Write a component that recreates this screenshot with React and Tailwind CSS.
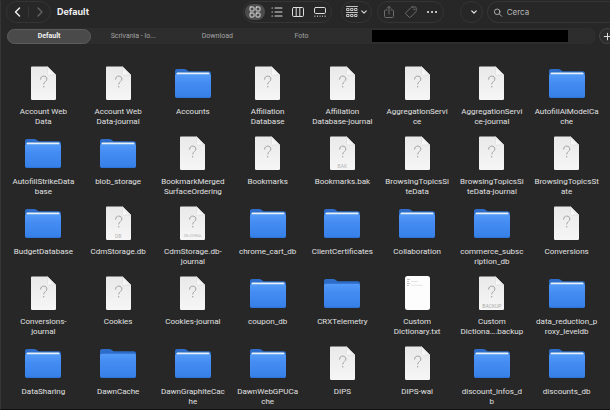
import React from 'react';

const files = [
  ['doc', 'Account Web', 'Data'],
  ['doc', 'Account Web', 'Data-journal'],
  ['folder', 'Accounts'],
  ['doc', 'Affiliation', 'Database'],
  ['doc', 'Affiliation', 'Database-journal'],
  ['doc', 'AggregationServi', 'ce'],
  ['doc', 'AggregationServi', 'ce-journal'],
  ['folder', 'AutofillAiModelCa', 'che'],
  ['folder', 'AutofillStrikeData', 'base'],
  ['folder', 'blob_storage'],
  ['doc', 'BookmarkMerged', 'SurfaceOrdering'],
  ['doc', 'Bookmarks'],
  ['bak', 'Bookmarks.bak'],
  ['doc', 'BrowsingTopicsSi', 'teData'],
  ['doc', 'BrowsingTopicsSi', 'teData-journal'],
  ['doc', 'BrowsingTopicsSt', 'ate'],
  ['folder', 'BudgetDatabase'],
  ['db', 'CdmStorage.db'],
  ['dbjournal', 'CdmStorage.db-', 'journal'],
  ['folder', 'chrome_cart_db'],
  ['folder', 'ClientCertificates'],
  ['folder', 'Collaboration'],
  ['folder', 'commerce_subsc', 'ription_db'],
  ['doc', 'Conversions'],
  ['doc', 'Conversions-', 'journal'],
  ['doc', 'Cookies'],
  ['doc', 'Cookies-journal'],
  ['folder', 'coupon_db'],
  ['empty', 'CRXTelemetry'],
  ['txt', 'Custom', 'Dictionary.txt'],
  ['backup', 'Custom', 'Dictiona….backup'],
  ['folder', 'data_reduction_p', 'roxy_leveldb'],
  ['folder', 'DataSharing'],
  ['empty', 'DawnCache'],
  ['folder', 'DawnGraphiteCac', 'he'],
  ['folder', 'DawnWebGPUCa', 'che'],
  ['doc', 'DIPS'],
  ['doc', 'DIPS-wal'],
  ['folder', 'discount_infos_d', 'b'],
  ['folder', 'discounts_db'],
];

const captions = {
  bak: ['BAK', 'text-[5px] text-[#b4b4b4]'],
  db: ['DB', 'text-[5px] text-[#b4b4b4]'],
  dbjournal: ['DB-JOURNAL', 'text-[3px] text-[#b4b4b4]'],
  backup: ['BACKUP', 'text-[5px] text-[#a8a8a8]'],
};

function Gradients() {
  return (
    <svg className="absolute size-0" aria-hidden="true">
      <defs>
        <linearGradient id="front" x1="0" y1="0" x2="0" y2="1">
          <stop offset="0" stopColor="#539af8" />
          <stop offset="0.35" stopColor="#448cf2" />
          <stop offset="1" stopColor="#3580e8" />
        </linearGradient>
        <linearGradient id="sheet" x1="0" y1="0" x2="0" y2="1">
          <stop offset="0" stopColor="#e9e9e9" />
          <stop offset="1" stopColor="#f6f6f6" />
        </linearGradient>
        <linearGradient id="fold" x1="0" y1="1" x2="1" y2="0">
          <stop offset="0" stopColor="#ffffff" />
          <stop offset="1" stopColor="#dcdcdc" />
        </linearGradient>
      </defs>
    </svg>
  );
}

function Folder({ filled }) {
  return (
    <svg className="size-9" viewBox="0 0 36 36" aria-hidden="true">
      <path d="M0 5C0 3.800.8 3 2.200 3h7c.9 0 1.500.2 2.200.7l1.400 1c.6.4 1.200.6 2 .6h19C35.200 5.300 36 6.100 36 7.500V20H0Z" fill="#2d6cc9" />
      {filled && <rect x="1.500" y="6.500" width="33" height="4" rx="1" fill="#e6f1f7" />}
      <path d={filled ? 'M0 10c0-1 .8-1.800 1.800-1.800h32.400c1 0 1.800.8 1.800 1.800v20c0 1.200-.8 2-2 2H2c-1.200 0-2-.8-2-2Z' : 'M0 9.500C0 8.500.8 7.700 1.800 7.700h32.400c1 0 1.800.8 1.800 1.800V30c0 1.200-.8 2-2 2H2c-1.200 0-2-.8-2-2Z'} fill="url(#front)" />
      <path d="M1 31.400h34" stroke="#2d71d3" strokeWidth=".8" />
    </svg>
  );
}

function Document({ kind }) {
  const caption = captions[kind];
  return (
    <span className="relative flex h-9 w-[25px] justify-center">
      <svg className="h-9 w-[25px]" viewBox="0 0 25 36" aria-hidden="true">
        <path d="M0 1.700C0 .9.500.5 1.200.5H16.500L25 9V32.700c0 .8-.4 1.200-1.200 1.200H1.200C.4 33.900 0 33.500 0 32.700Z" fill="url(#sheet)" />
        <path d="M16.500.5 25 9h-7c-1 0-1.500-.6-1.500-1.600Z" fill="url(#fold)" stroke="#cccccc" strokeWidth=".4" />
        <path d="M9.600 13.200c0-2 1.300-3.100 3.100-3.100s3.200 1.200 3.200 2.900c0 2.500-3.200 2.600-3.200 5.100" fill="none" stroke="#a2a2a2" strokeWidth="1" strokeLinecap="round" />
        <circle cx="12.700" cy="20.700" r=".75" fill="#a2a2a2" />
      </svg>
      {caption && (
        <span className={`absolute bottom-[3px] leading-[6px] ${caption[1]}`}>{caption[0]}</span>
      )}
    </span>
  );
}

function TextFile() {
  return (
    <svg className="h-9 w-[25px]" viewBox="0 0 25 36" aria-hidden="true">
      <rect width="25" height="34" rx="2.500" fill="#fdfdfd" />
      <path d="M2 3.500h3M2 5.500h2M2 7.500h3M2 9.500h2" stroke="#a9a9a9" strokeWidth=".7" />
      <path d="M6 5.500h7M6 9.300h12" stroke="#d2d2d2" strokeWidth=".6" />
    </svg>
  );
}

function Item({ entry }) {
  const [kind, ...lines] = entry;
  return (
    <li className="flex flex-col items-center">
      {kind === 'folder' || kind === 'empty' ? (
        <Folder filled={kind === 'folder'} />
      ) : kind === 'txt' ? (
        <TextFile />
      ) : (
        <Document kind={kind} />
      )}
      <span className="mt-[5px] flex flex-col items-center text-[8px] leading-[10px] whitespace-nowrap text-[#e0e0e0]">
        {lines.map((line) => (
          <span key={line}>{line}</span>
        ))}
      </span>
    </li>
  );
}

const pill = 'flex h-[22px] shrink-0 items-center rounded-full border border-[#353535] bg-[#272727]';

function Icon({ className, children, size = 14 }) {
  return (
    <svg width={size} height={size} viewBox="0 0 14 14" fill="none" stroke="currentColor" strokeWidth="1" strokeLinecap="round" strokeLinejoin="round" className={className} aria-hidden="true">
      {children}
    </svg>
  );
}

function ToolButton({ label, className = '', children }) {
  return (
    <button type="button" aria-label={label} className={`flex h-full flex-1 items-center justify-center ${className}`}>
      {children}
    </button>
  );
}

function Toolbar() {
  return (
    <header className="flex h-6 items-center pl-[5px]">
      <nav className={`${pill} w-[45px]`}>
        <ToolButton label="Indietro" className="text-[#f2f2f2]">
          <Icon><path d="M8.500 3 4.500 7l4 4" strokeWidth="1.400" /></Icon>
        </ToolButton>
        <span className="h-3 w-px bg-[#353535]" />
        <ToolButton label="Avanti" className="text-[#666666]">
          <Icon><path d="m5 3 4 4-4 4" strokeWidth="1.200" /></Icon>
        </ToolButton>
      </nav>
      <h1 className="ml-1.5 flex-1 font-['Inter','Liberation_Sans',sans-serif] text-[9px] font-bold text-[#f0f0f0]">Default</h1>

      <div className={`${pill} w-[89px] text-[#dddddd]`}>
        <ToolButton label="Icone">
          <span className="flex h-4 w-5 items-center justify-center rounded-full bg-[#4d4d4d]">
            <Icon>
              <rect x="2" y="2" width="4" height="4" rx=".8" />
              <rect x="8" y="2" width="4" height="4" rx=".8" />
              <rect x="2" y="8" width="4" height="4" rx=".8" />
              <rect x="8" y="8" width="4" height="4" rx=".8" />
            </Icon>
          </span>
        </ToolButton>
        <ToolButton label="Elenco">
          <Icon><path d="M5 3h7M5 7h7M5 11h7M2 3h.4M2 7h.4M2 11h.4" strokeWidth="1.100" /></Icon>
        </ToolButton>
        <ToolButton label="Colonne">
          <Icon><rect x="1.500" y="2.500" width="11" height="9" rx="1.200" /><path d="M5.200 2.500v9M8.800 2.500v9" /></Icon>
        </ToolButton>
        <ToolButton label="Galleria">
          <Icon><rect x="1.500" y="2.500" width="11" height="6" rx="1.200" /><path d="M1.500 11.300h.8M4.200 11.300H5M6.700 11.300h.7M9.100 11.300h.7M11.700 11.300h.8" strokeWidth="1.500" strokeLinecap="butt" /></Icon>
        </ToolButton>
      </div>

      <button type="button" aria-label="Raggruppa" className={`${pill} ml-[9px] w-[31px] justify-center gap-px text-[#d5d5d5]`}>
        <Icon>
          <path d="M1.500 1.500h11M1.500 7.500h11" strokeWidth=".9" />
          <path d="M2 3.500h2v2H2ZM6 3.500h2v2H6ZM10 3.500h2v2h-2ZM2 9.500h2v2H2ZM6 9.500h2v2H6ZM10 9.500h2v2h-2Z" strokeWidth=".9" />
        </Icon>
        <Icon size={8}><path d="m3 5 4 4 4-4" strokeWidth="2" /></Icon>
      </button>

      <div className={`${pill} ml-[5px] w-[67px]`}>
        <ToolButton label="Condividi" className="text-[#6c6c6c]">
          <Icon><path d="M5 5H3.500c-.6 0-1 .4-1 1v5.500c0 .6.4 1 1 1h7c.6 0 1-.4 1-1V6c0-.6-.4-1-1-1H9M7 9V1.500M5 3.300l2-2 2 2" /></Icon>
        </ToolButton>
        <ToolButton label="Tag" className="text-[#6c6c6c]">
          <Icon><path d="M8.200 2h3c.6 0 1 .4 1 1v2.800c0 .4-.1.700-.4 1l-5.200 5.400c-.4.4-1 .4-1.400 0L1.900 9.100c-.4-.4-.4-1 0-1.400L7 2.500c.3-.3.700-.5 1.200-.5Z" /><circle cx="10" cy="4.300" r=".3" /></Icon>
        </ToolButton>
        <ToolButton label="Altro" className="text-[#eeeeee]">
          <Icon><path d="M3 7h.1M7 7h.1M11 7h.1" strokeWidth="1.900" /></Icon>
        </ToolButton>
      </div>

      <button type="button" aria-label="Opzioni" className={`${pill} ml-4 w-[23px] justify-end pr-1 text-[#eeeeee]`}>
        <Icon size={8}><path d="m3 5 4 4 4-4" strokeWidth="2" /></Icon>
      </button>

      <label className="ml-1 flex h-[22px] w-[123px] shrink-0 items-center gap-1 rounded-l-full border border-r-0 border-[#353535] bg-[#272727] pl-[5px] text-[#b8b8b8]">
        <Icon size={11}><circle cx="6" cy="6" r="4" strokeWidth="1.300" /><path d="m9 9 3.500 3.500" strokeWidth="1.300" /></Icon>
        <input type="search" aria-label="Cerca" placeholder="Cerca" className="w-full min-w-0 bg-transparent font-['Inter','Liberation_Sans',sans-serif] text-[8px] outline-none placeholder:text-[#b8b8b8]" />
      </label>
    </header>
  );
}

function Tabs() {
  return (
    <div className="mt-1 flex h-4 items-center overflow-hidden pl-1.5">
      <div className="grid h-full flex-1 grid-cols-7 items-center rounded-full bg-[#2d2d2d] text-[7px] text-[#a3a3a3]">
        <div role="tablist" className="col-span-4 grid grid-cols-4 items-center">
          <button type="button" role="tab" aria-selected="true" className="h-[15px] rounded-full border border-[#5c5c5c] bg-[#4a4a4a] font-bold text-[#f0f0f0]">
            Default
          </button>
          <button type="button" role="tab" aria-selected="false">Scrivania - lo...</button>
          <button type="button" role="tab" aria-selected="false">Download</button>
          <button type="button" role="tab" aria-selected="false">Foto</button>
        </div>
        <div className="col-span-3 px-7">
          <div className="h-3 bg-black" />
        </div>
      </div>
      <button type="button" aria-label="Nuovo pannello" className="-mr-[5px] ml-[3px] flex size-4 shrink-0 items-center justify-center rounded-full border border-[#454545] bg-[#2d2d2d] text-[#dddddd]">
        <Icon size={9}><path d="M7 2v10M2 7h10" strokeWidth="1.600" /></Icon>
      </button>
    </div>
  );
}

export default function App() {
  return (
    <div className="flex h-screen flex-col overflow-hidden border-b border-l border-b-[#111111] border-l-[#353535] bg-[#272727] font-['Roboto','Liberation_Sans',sans-serif]">
      <Gradients />
      <Toolbar />
      <Tabs />
      <main className="min-h-0 flex-1 overflow-hidden pt-[22px] pr-1.5 pl-[5px]">
        <ul className="grid auto-rows-[70px] grid-cols-8">
          {files.map((entry) => (
            <Item key={entry.join('')} entry={entry} />
          ))}
        </ul>
      </main>
    </div>
  );
}
